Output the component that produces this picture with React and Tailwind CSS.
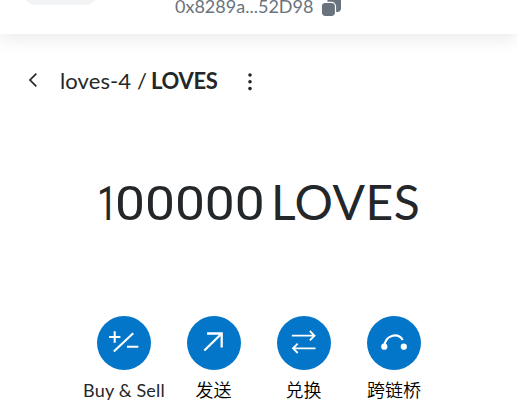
const BuyIcon = () => (
  <svg viewBox="0 0 54 54" className="h-[54px] w-[54px]" fill="none" stroke="white" strokeWidth="2.1">
    <path d="M17.7 15.3V26.7M12 21H23.4M16.8 35.5L36.2 17.2M30 30.8H41.3" />
  </svg>
)

const SendIcon = () => (
  <svg viewBox="0 0 54 54" className="h-[54px] w-[54px]" fill="none" stroke="white" strokeWidth="2.3">
    <path d="M20 17.5H34.7V31.5M34.7 17.5L17.3 34.5" />
  </svg>
)

const SwapIcon = () => (
  <svg viewBox="0 0 54 54" className="h-[54px] w-[54px]" fill="none" stroke="white" strokeWidth="1.8">
    <path d="M14.8 19.7H37.5M32.8 15L37.5 19.7L32.8 24.4M38.5 32.3H16M20.7 27.6L16 32.3L20.7 37" />
  </svg>
)

const BridgeIcon = () => (
  <svg viewBox="0 0 54 54" className="h-[54px] w-[54px]" fill="none" stroke="white" strokeWidth="2.2">
    <path d="M17.3 30.7C18 19 30.5 16 35.8 24" />
    <circle cx="17.3" cy="30.7" r="3.1" fill="white" stroke="none" />
    <circle cx="36.8" cy="30.7" r="3.1" fill="white" stroke="none" />
  </svg>
)

const actions = [
  { label: "Buy & Sell", Icon: BuyIcon, style: "tracking-[0.17px]" },
  { label: "发送", Icon: SendIcon, style: "pr-px font-[350] text-black" },
  { label: "兑换", Icon: SwapIcon, style: "pr-px font-[350] text-black" },
  { label: "跨链桥", Icon: BridgeIcon, style: "font-[350] text-black" },
]

const App = () => {
  return (
    <div className="flex h-[411px] w-[517px] flex-col overflow-hidden bg-white font-['Lato','Noto_Sans_CJK_SC',sans-serif] text-[#24272a]">
      <header className="flex h-[34px] shrink-0 bg-white shadow-[0_3px_20px_rgba(0,0,0,0.1)]">
        <div className="-mt-[27px] ml-[21px] h-8 w-[79px] shrink-0 rounded-full bg-[#f2f3f4]"></div>
        <div className="-mt-[6px] ml-[75px] flex h-[25px]">
          <span className="w-[139px] whitespace-nowrap text-[18px] leading-[25px] tracking-[0.01px] text-[#6a737d]">0x8289a...52D98</span>
          <svg viewBox="0 0 22 22" className="ml-[7px] mt-[1px] h-[22px] w-[22px]" fill="#6a737d">
            <rect x="6.5" y="0" width="13.5" height="17" rx="4" />
            <rect x="0.3" y="7.4" width="14.2" height="14.2" rx="4" stroke="white" strokeWidth="1.2" />
          </svg>
        </div>
      </header>

      <nav className="flex h-[94px] shrink-0 items-center pl-[27px]">
        <svg viewBox="0 0 12 16" className="-mt-[3px] h-4 w-3" fill="none" stroke="#24272a" strokeWidth="1.7">
          <path d="M9.3 1.7L3 8L9.3 14.3" />
        </svg>
        <div className="ml-[21px] flex whitespace-pre text-[22px] leading-7">
          <span className="w-[91px] tracking-[0.1px]">loves-4 / </span>
          <span className="w-[67px] font-bold tracking-[-0.3px]">LOVES</span>
        </div>
        <svg viewBox="0 0 6 20" className="ml-[29px] h-5 w-[6px]" fill="#24272a">
          <circle cx="3" cy="4" r="1.8" />
          <circle cx="3" cy="10.8" r="1.8" />
          <circle cx="3" cy="17.6" r="1.8" />
        </svg>
      </nav>

      <div className="mt-[44px] flex h-[60px] shrink-0 items-baseline whitespace-nowrap pl-[97px] text-[48px] leading-[60px]">
        <span className="w-[18px] origin-left scale-x-75 font-['Roboto',sans-serif] tracking-[-4px]">1</span>
        <span className="w-[156px] origin-left scale-x-[1.11] font-['Roboto',sans-serif]">00000</span>
        <span className="tracking-[0.5px]">LOVES</span>
      </div>

      <div className="mt-[84px] flex pl-[79px]">
        {actions.map(({ label, Icon, style }) => (
          <div key={label} className="flex w-[90px] shrink-0 flex-col items-center">
            <div className="h-[54px] w-[54px] rounded-full bg-[#0376c9]">
              <Icon />
            </div>
            <span className={`mt-[7px] whitespace-nowrap text-[18px] leading-[26px] ${style}`}>{label}</span>
          </div>
        ))}
      </div>
    </div>
  )
}

export default App
